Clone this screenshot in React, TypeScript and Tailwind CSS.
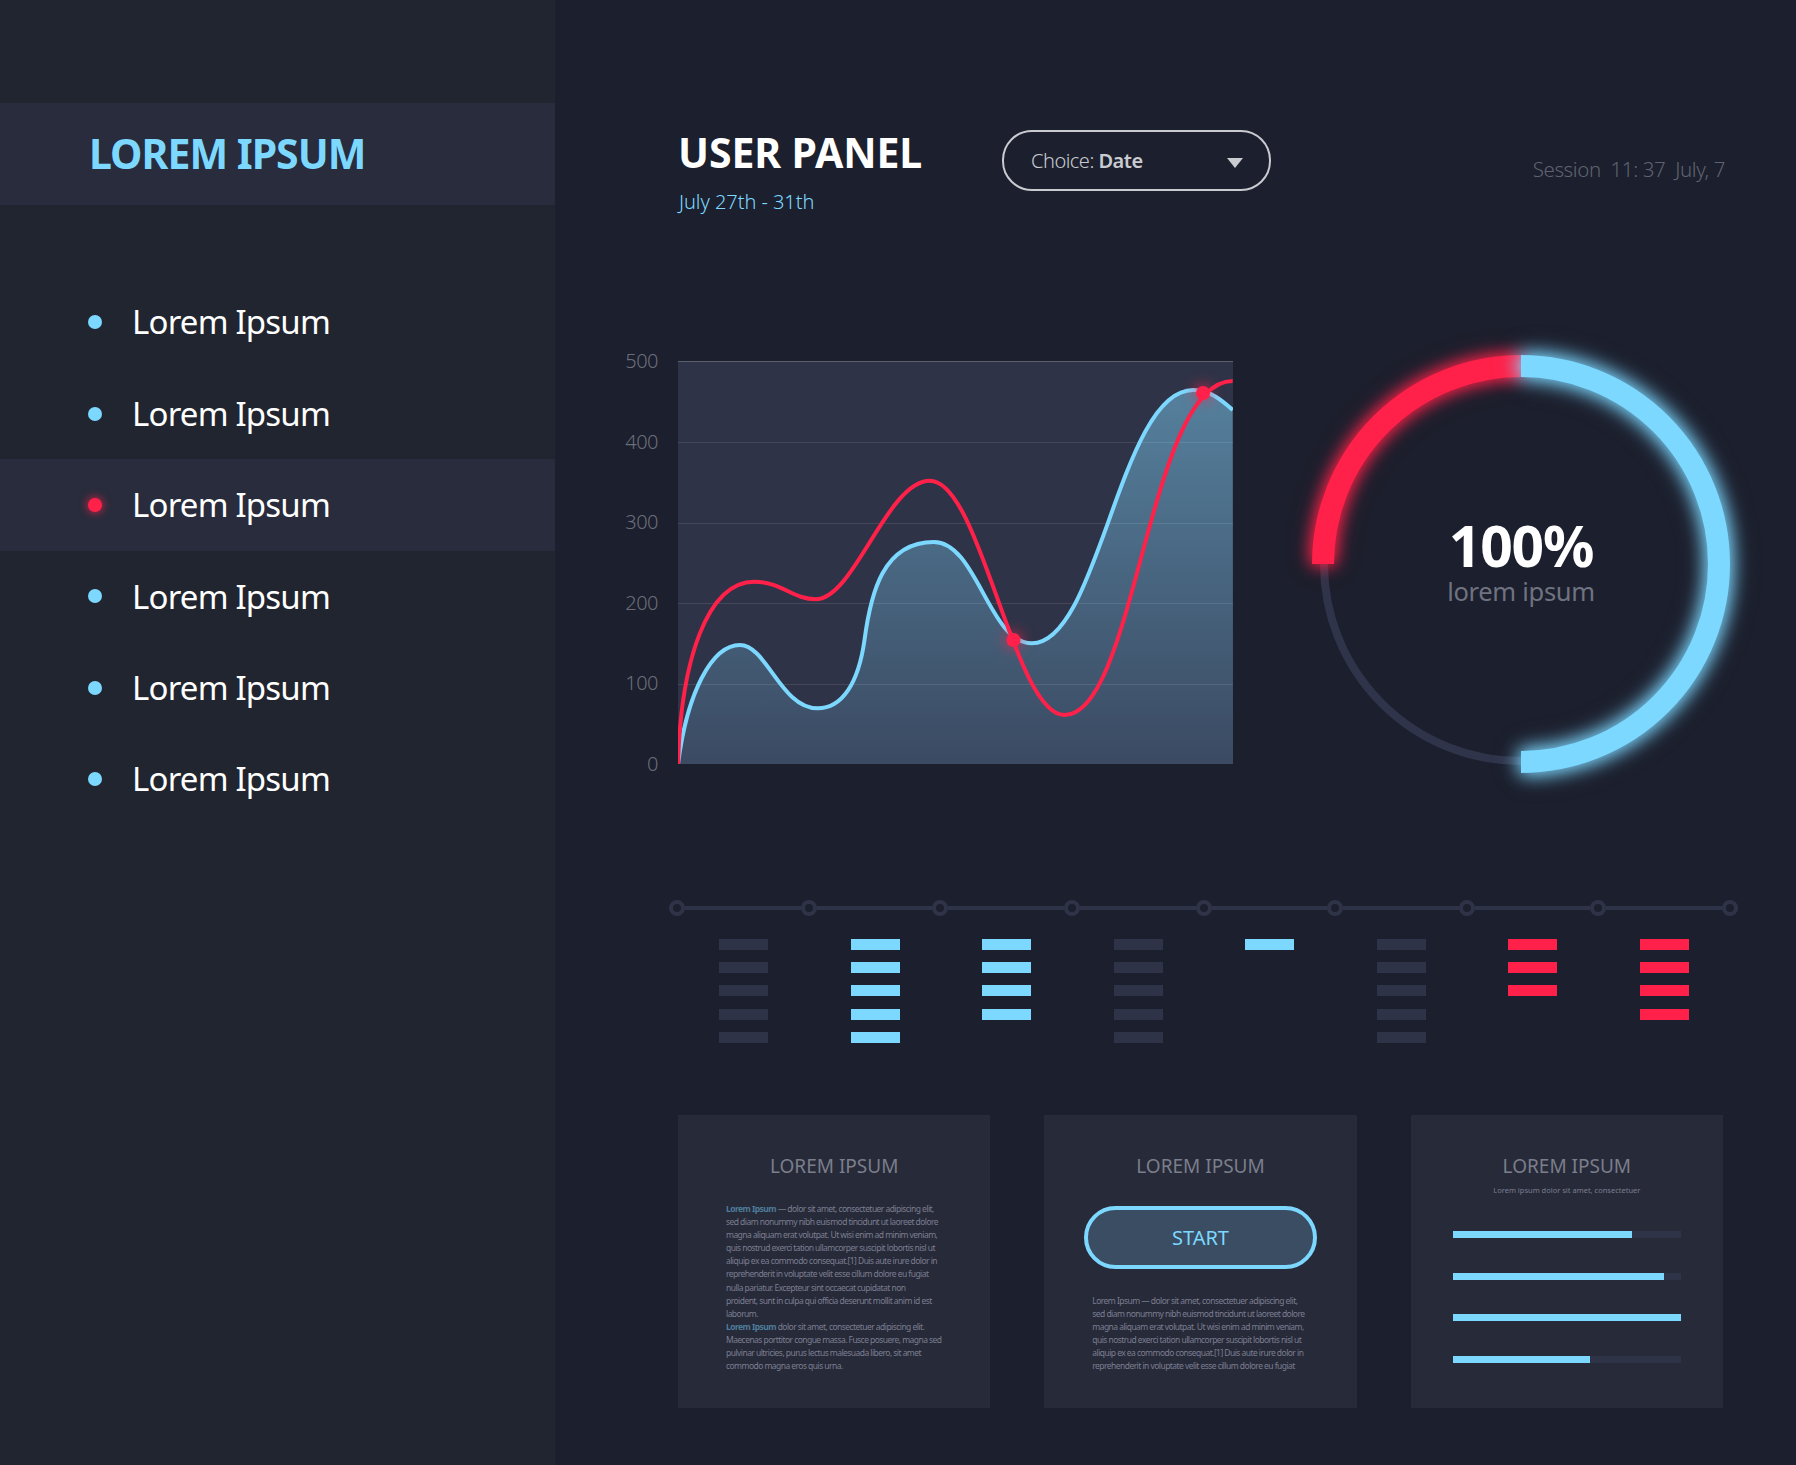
import React from "react";

const font = { fontFamily: '"Noto Sans", sans-serif' };

const navItems = ["Lorem Ipsum", "Lorem Ipsum", "Lorem Ipsum", "Lorem Ipsum", "Lorem Ipsum", "Lorem Ipsum"];

// curve points read off a 2.45x / 3x crop of the plot, start point then one row per cubic segment
const blueCurve = [
  [168, 1273],
  [190, 1060, 250, 915, 320, 915],
  [385, 915, 420, 1105, 510, 1105],
  [570, 1105, 610, 1030, 625, 900],
  [640, 760, 670, 606, 795, 606],
  [900, 606, 930, 910, 1035, 910],
  [1200, 910, 1250, 150, 1430, 150],
  [1470, 150, 1500, 180, 1527, 210],
];

const redCurve = [
  [168, 1273],
  [175, 960, 240, 725, 355, 725],
  [420, 725, 450, 778, 505, 778],
  [600, 778, 680, 422, 785, 422],
  [910, 422, 990, 1125, 1115, 1125],
  [1290, 1125, 1320, 123, 1527, 123],
];

function toPath(curve: number[][]) {
  const px = (x: number) => ((x - 168) / 2.45).toFixed(1);
  const py = (y: number) => ((y - 63) / 3).toFixed(1);
  const [start, ...segs] = curve;
  let d = `M${px(start[0])} ${py(start[1])}`;
  segs.forEach((s) => {
    d += ` C${px(s[0])} ${py(s[1])} ${px(s[2])} ${py(s[3])} ${px(s[4])} ${py(s[5])}`;
  });
  return d;
}

function Chart() {
  const blue = toPath(blueCurve);
  const red = toPath(redCurve);
  return (
    <svg width="555" height="403" viewBox="0 0 555 403" className="shrink-0">
      <defs>
        <linearGradient id="areaFill" x1="0" y1="0" x2="0" y2="1">
          <stop offset="0" stopColor="#55809d" />
          <stop offset="1" stopColor="#3b4a62" />
        </linearGradient>
      </defs>
      <rect width="555" height="403" fill="#2f3347" />
      <path d={`${blue} L555 403 L0 403 Z`} fill="url(#areaFill)" />
      <line x1="0" x2="555" y1="0.5" y2="0.5" stroke="#5b5f6d" />
      {[81, 162, 242, 323].map((y) => (
        <line key={y} x1="0" x2="555" y1={y + 0.5} y2={y + 0.5} stroke="#ffffff" strokeOpacity="0.1" />
      ))}
      <path d={blue} fill="none" stroke="#7dd8ff" strokeWidth="4" />
      <path d={red} fill="none" stroke="#ff2149" strokeWidth="4" />
      <circle cx="335.5" cy="279" r="7" fill="#ff2149" className="drop-shadow-[0_0_7px_#ff2149]" />
      <circle cx="525" cy="32" r="7" fill="#ff2149" className="drop-shadow-[0_0_7px_#ff2149]" />
    </svg>
  );
}

function Donut() {
  return (
    <div className="relative w-[480px] h-[480px] shrink-0">
      <svg width="480" height="480" viewBox="0 0 480 480">
        <path d="M240 437 A197 197 0 0 1 43 240" fill="none" stroke="#30344a" strokeWidth="8" />
        <path
          d="M42 240 A198 198 0 0 1 240 42"
          fill="none"
          stroke="#ff2149"
          strokeWidth="22"
          className="[filter:drop-shadow(0_0_8px_#ff2149)_drop-shadow(0_0_8px_#ff214980)]"
        />
        <path
          d="M240 42 A198 198 0 0 1 240 438"
          fill="none"
          stroke="#7dd8ff"
          strokeWidth="22"
          className="[filter:drop-shadow(0_0_9px_#7dd8ff)_drop-shadow(0_0_9px_#7dd8ff90)]"
        />
      </svg>
      <div className="absolute inset-0 flex flex-col items-center justify-center">
        <span className="text-[57px] leading-[60px] font-bold text-white tracking-[-1.2px] mt-[-6px]">100%</span>
        <span className="text-[25.5px] leading-[32px] text-[#6f7380] tracking-[-0.3px]">lorem ipsum</span>
      </div>
    </div>
  );
}

const columns: { count: number; color: string }[] = [
  { count: 5, color: "bg-[#2f3347]" },
  { count: 5, color: "bg-[#7dd8ff]" },
  { count: 4, color: "bg-[#7dd8ff]" },
  { count: 5, color: "bg-[#2f3347]" },
  { count: 1, color: "bg-[#7dd8ff]" },
  { count: 5, color: "bg-[#2f3347]" },
  { count: 3, color: "bg-[#ff2149]" },
  { count: 4, color: "bg-[#ff2149]" },
];

function Timeline() {
  const nodes = Array.from({ length: 9 });
  return (
    <>
      <div className="flex items-center ml-[57px] w-[1069px] mt-[136px] h-4">
        {nodes.map((_, i) => (
          <React.Fragment key={i}>
            <span className="w-4 h-4 rounded-full border-[4px] border-[#2f3347] shrink-0" />
            {i < 8 && <span className="h-1 flex-1 bg-[#2f3347]" />}
          </React.Fragment>
        ))}
      </div>
      <div className="grid grid-cols-8 ml-[66px] w-[1052px] mt-[23px] h-[104px]">
        {columns.map((col, i) => (
          <div key={i} className="flex flex-col items-center gap-[12.2px]">
            {Array.from({ length: col.count }).map((_, j) => (
              <span key={j} className={`w-[49px] h-[11px] ${col.color}`} />
            ))}
          </div>
        ))}
      </div>
    </>
  );
}

function CardTitle({ children }: { children: React.ReactNode }) {
  return <h3 className="text-center text-[19px] leading-[28px] text-[#7b7e8b] font-normal">{children}</h3>;
}

function Lines({ lines }: { lines: React.ReactNode[] }) {
  return (
    <p className="text-[8.5px] leading-[13.1px] text-[#7b7e90] tracking-[-0.55px] whitespace-nowrap">
      {lines.map((l, i) => (
        <span key={i} className="block">
          {l}
        </span>
      ))}
    </p>
  );
}

const Hl = ({ children }: { children: React.ReactNode }) => (
  <b className="font-bold text-[#4d7c99]">{children}</b>
);

function TextCard() {
  return (
    <div className="bg-[#272a39] h-[293px] pt-[37px]">
      <CardTitle>LOREM IPSUM</CardTitle>
      <div className="pl-[48px] mt-[22px]">
        <Lines
          lines={[
            <><Hl>Lorem Ipsum</Hl> — dolor sit amet, consectetuer adipiscing elit,</>,
            "sed diam nonummy nibh euismod tincidunt ut laoreet dolore",
            "magna aliquam erat volutpat. Ut wisi enim ad minim veniam,",
            "quis nostrud exerci tation ullamcorper suscipit lobortis nisl ut",
            "aliquip ex ea commodo consequat.[1] Duis aute irure dolor in",
            "reprehenderit in voluptate velit esse cillum dolore eu fugiat",
            "nulla pariatur. Excepteur sint occaecat cupidatat non",
            "proident, sunt in culpa qui officia deserunt mollit anim id est",
            "laborum.",
            <><Hl>Lorem Ipsum</Hl> dolor sit amet, consectetuer adipiscing elit.</>,
            "Maecenas porttitor congue massa. Fusce posuere, magna sed",
            "pulvinar ultricies, purus lectus malesuada libero, sit amet",
            "commodo magna eros quis urna.",
          ]}
        />
      </div>
    </div>
  );
}

function StartCard() {
  return (
    <div className="bg-[#272a39] h-[293px] pt-[37px]">
      <CardTitle>LOREM IPSUM</CardTitle>
      <button
        type="button"
        className="block mx-auto mt-[26px] w-[233px] h-[63px] rounded-full border-[4px] border-[#7dd8ff] bg-[#3a4d63] text-[#7dd8ff] text-[20px]"
      >
        START
      </button>
      <div className="pl-[48px] mt-[25px]">
        <Lines
          lines={[
            "Lorem Ipsum — dolor sit amet, consectetuer adipiscing elit,",
            "sed diam nonummy nibh euismod tincidunt ut laoreet dolore",
            "magna aliquam erat volutpat. Ut wisi enim ad minim veniam,",
            "quis nostrud exerci tation ullamcorper suscipit lobortis nisl ut",
            "aliquip ex ea commodo consequat.[1] Duis aute irure dolor in",
            "reprehenderit in voluptate velit esse cillum dolore eu fugiat",
          ]}
        />
      </div>
    </div>
  );
}

function BarsCard() {
  return (
    <div className="bg-[#272a39] h-[293px] pt-[37px]">
      <CardTitle>LOREM IPSUM</CardTitle>
      <p className="text-center text-[7.5px] leading-[12px] mt-[4px] text-[#7b7e90]">
        Lorem ipsum dolor sit amet, consectetuer
      </p>
      <div className="flex flex-col gap-[34.7px] px-[42px] mt-[35px]">
        {[78.5, 92.7, 100, 60].map((v) => (
          <div key={v} className="h-[7px] bg-[#2f3347]">
            <div className="h-full bg-[#7dd8ff]" style={{ width: `${v}%` }} />
          </div>
        ))}
      </div>
    </div>
  );
}

export default function App() {
  return (
    <div className="flex w-[1796px] h-[1465px] overflow-hidden bg-[#1c1f2d]" style={font}>
      <aside className="w-[555px] shrink-0 bg-[#212530] pt-[103px]">
        <div className="h-[102px] bg-[#282c3c] flex items-center pl-[89px] pb-[1px]">
          <span className="text-[41px] font-bold text-[#7dd8ff] tracking-[-1px]">LOREM IPSUM</span>
        </div>
        <nav className="mt-[71.5px]">
          {navItems.map((label, i) => (
            <div key={i} className={`h-[91.4px] flex items-center pl-[88px] ${i === 2 ? "bg-[#282c3c]" : ""}`}>
              <span
                className={`w-[14px] h-[14px] rounded-full shrink-0 ${
                  i === 2 ? "bg-[#ff2149] shadow-[0_0_10px_#ff2149]" : "bg-[#7dd8ff]"
                }`}
              />
              <span className="ml-[30px] text-[33px] text-white tracking-[-0.8px]">{label}</span>
            </div>
          ))}
        </nav>
      </aside>

      <main className="flex-1 pl-[57px] pt-[130px]">
        <header className="flex items-start ml-[66px] pr-[71px]">
          <div className="w-[324px]">
            <h1 className="text-[41px] leading-[45px] font-bold text-white tracking-[-0.1px]">USER PANEL</h1>
            <p className="text-[20px] leading-[28px] mt-[13px] pl-[1px] text-[#7dd8ff] font-light tracking-[-0.05px]">
              July 27th - 31th
            </p>
          </div>
          <div className="w-[269px] h-[61px] rounded-[30px] border-2 border-[#c9cbd0] flex items-center pl-[27px] pr-[26px] justify-between">
            <span className="text-[20px] text-[#c9cbd0] font-light tracking-[-0.5px]">
              Choice: <b className="font-semibold">Date</b>
            </span>
            <span className="w-0 h-0 border-x-[8px] border-x-transparent border-t-[10px] border-t-[#c9cbd0] mt-[4px]" />
          </div>
          <span className="ml-auto mt-[23px] text-[20.5px] leading-[32px] text-[#5f6370] font-light tracking-[-0.4px] whitespace-pre">
            Session  11: 37  July, 7
          </span>
        </header>

        <section className="flex items-start mt-[145px] h-[403px]">
          <div className="w-[46px] mr-[20px] h-[403px] flex flex-col justify-between items-end text-[20px] leading-[0] text-[#6a6e7b] font-light tracking-[-0.5px]">
            {["500", "400", "300", "200", "100", "0"].map((n) => (
              <span key={n}>{n}</span>
            ))}
          </div>
          <Chart />
          <div className="ml-[48px] mt-[-37px]">
            <Donut />
          </div>
        </section>

        <Timeline />

        <section className="grid grid-cols-3 gap-[54px] ml-[66px] w-[1045px] mt-[72px]">
          <TextCard />
          <StartCard />
          <BarsCard />
        </section>
      </main>
    </div>
  );
}
